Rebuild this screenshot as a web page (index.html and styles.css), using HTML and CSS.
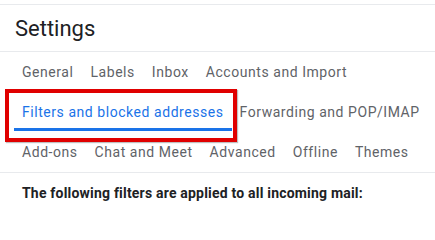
FILE: index.html
```html
<!DOCTYPE html>
<html>
<head>
<meta charset="utf-8">
<link rel="stylesheet" href="styles.css">
</head>
<body>
<div class="page">
  <div class="title">Settings</div>
  <nav class="tabs">
    <div class="tab-row">
      <span class="tab">General</span>
      <span class="tab">Labels</span>
      <span class="tab">Inbox</span>
      <span class="tab">Accounts and Import</span>
    </div>
    <div class="tab-row">
      <span class="tab active">Filters and blocked addresses</span>
      <span class="tab">Forwarding and POP/IMAP</span>
    </div>
    <div class="tab-row">
      <span class="tab">Add-ons</span>
      <span class="tab">Chat and Meet</span>
      <span class="tab">Advanced</span>
      <span class="tab">Offline</span>
      <span class="tab">Themes</span>
    </div>
  </nav>
  <div class="content">The following filters are applied to all incoming mail:</div>
  <div class="highlight"></div>
</div>
</body>
</html>
```
FILE: styles.css
```css
html, body {
  margin: 0;
  padding: 0;
  background: #fff;
}
.page {
  position: relative;
  margin-top: 4px;
  border-top: 1px solid #e8eaed;
  font-family: Roboto, "Noto Sans", sans-serif;
}
.title {
  height: 47px;
  box-sizing: border-box;
  border-bottom: 1px solid #e8eaed;
  padding-left: 15px;
  line-height: 47px;
  font-size: 22px;
  color: #202124;
  letter-spacing: 0;
}
.tabs {
  border-bottom: 1px solid #e8eaed;
  padding-left: 14px;
}
.tab-row {
  display: flex;
  height: 40px;
}
.tab {
  display: flex;
  align-items: center;
  padding: 0 8px;
  font-size: 14px;
  color: #5f6368;
  letter-spacing: 0.55px;
  margin-right: 1px;
  box-sizing: border-box;
}
.tab.active {
  color: #1a73e8;
  border-bottom: 3px solid #1a73e8;
  padding-top: 3px;
  height: 39px;
  margin-right: 0;
}
.content {
  padding: 12px 22px;
  font-size: 14px;
  font-weight: bold;
  color: #202124;
  letter-spacing: 0.2px;
}
.highlight {
  position: absolute;
  left: 5px;
  top: 84px;
  width: 232px;
  height: 53px;
  box-sizing: border-box;
  border: 4px solid #e00000;
  box-shadow: 1px 1px 1px rgba(0,0,0,0.25);
}
```
